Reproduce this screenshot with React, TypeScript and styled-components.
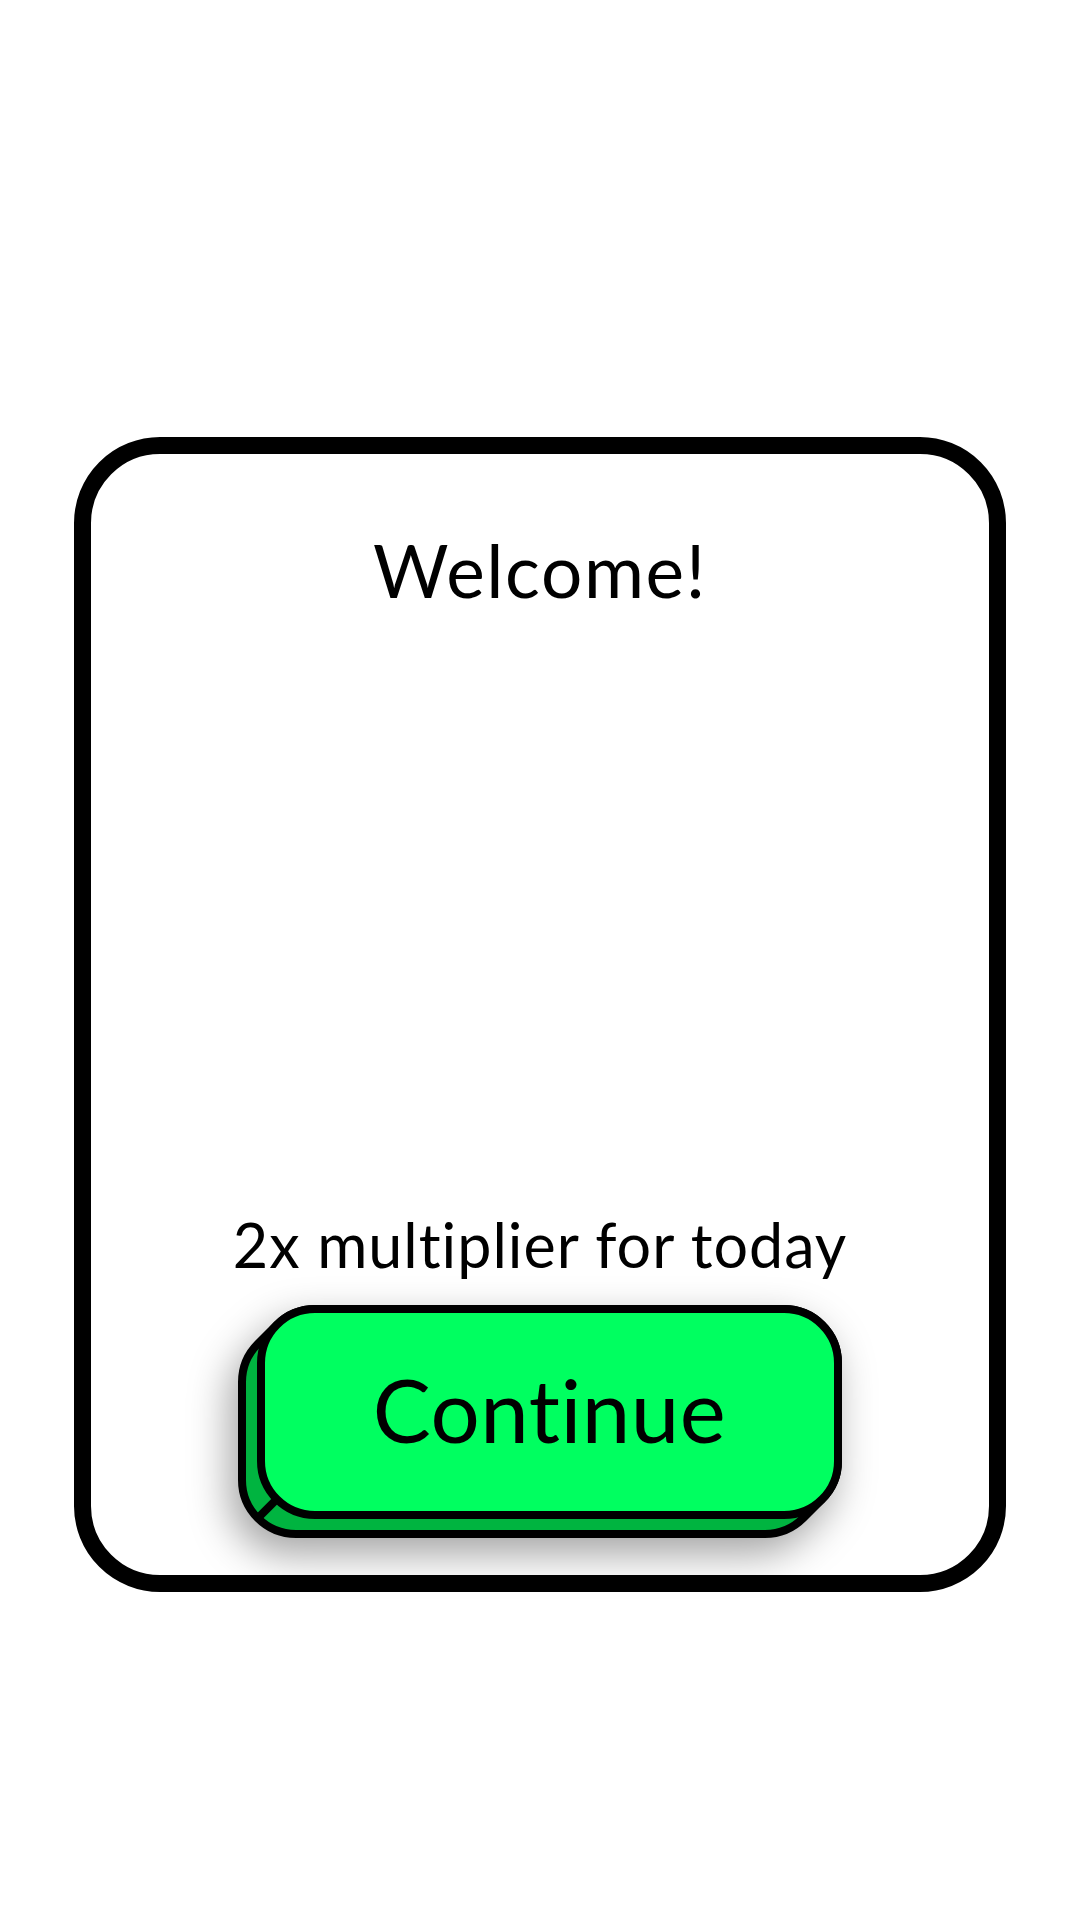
import styled, { createGlobalStyle } from 'styled-components';

const GlobalStyle = createGlobalStyle`
  html, body {
    margin: 0;
    padding: 0;
    background: #ffffff;
  }
  body {
    font-family: Lato, "Noto Sans", sans-serif;
    font-variant-ligatures: none;
    color: #000;
  }
`;

const Page = styled.div`
  width: 1080px;
  height: 1920px;
  box-sizing: border-box;
  padding-top: 437px;
  display: flex;
  justify-content: center;
  align-items: flex-start;
`;

const Card = styled.div`
  width: 932px;
  height: 1155px;
  box-sizing: border-box;
  border: 17px solid #000;
  border-radius: 86px;
  background: #fff;
  display: flex;
  flex-direction: column;
  align-items: center;
  padding: 80px 0 37px;
`;

const Title = styled.h1`
  margin: 0;
  font-size: 73px;
  font-weight: 400;
  line-height: 1;
  letter-spacing: 1.6px;
`;

const Spacer = styled.div`
  flex: 1;
`;

const Subtitle = styled.p`
  margin: 0 0 30px;
  font-size: 61px;
  font-weight: 400;
  line-height: 1;
  letter-spacing: 1px;
`;

const ButtonWrap = styled.div`
  position: relative;
  width: 604px;
  height: 233px;
  filter: drop-shadow(-8px 16px 20px rgba(0, 0, 0, 0.36));
`;

const Side = styled.svg`
  position: absolute;
  left: 0;
  top: 0;
`;

const Face = styled.button`
  position: absolute;
  right: 0;
  top: 0;
  width: 585px;
  height: 214px;
  box-sizing: border-box;
  border: 8px solid #000;
  border-radius: 58px;
  background: #00ff60;
  color: #000;
  font-family: inherit;
  font-size: 87px;
  line-height: 1;
  letter-spacing: 0.5px;
  padding: 0 0 6px;
  cursor: pointer;
`;

const hull =
  'M77 4 H546 A54 54 0 0 1 600 58 V156 A54 54 0 0 1 584.18 194.18 L565.18 213.18 ' +
  'A54 54 0 0 1 527 229 H58 A54 54 0 0 1 4 175 V77 A54 54 0 0 1 19.82 38.82 ' +
  'L38.82 19.82 A54 54 0 0 1 77 4 Z';

export default function App() {
  return (
    <>
      <GlobalStyle />
      <Page>
        <Card>
          <Title>Welcome!</Title>
          <Spacer />
          <Subtitle>2x multiplier for today</Subtitle>
          <ButtonWrap>
            <Side width="604" height="233" viewBox="0 0 604 233">
              <path d={hull} fill="#00b440" stroke="#000" strokeWidth="8" />
              <line x1="38.82" y1="194.18" x2="19.82" y2="213.18" stroke="#000" strokeWidth="8" />
            </Side>
            <Face>Continue</Face>
          </ButtonWrap>
        </Card>
      </Page>
    </>
  );
}
